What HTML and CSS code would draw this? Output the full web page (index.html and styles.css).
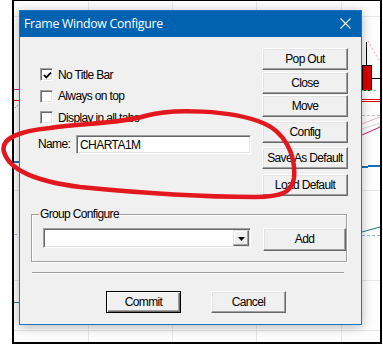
FILE: index.html
```html
<!DOCTYPE html>
<html>
<head>
<meta charset="utf-8">
<link rel="stylesheet" href="styles.css">
</head>
<body>
<div class="screen">
  <div class="frame">
    <svg class="chart" width="366" height="341" viewBox="14 1 366 341">
      <g stroke="#e7e7e7" stroke-width="1">
        <line x1="88.5" y1="0" x2="88.5" y2="344"/>
        <line x1="172.5" y1="0" x2="172.5" y2="344"/>
        <line x1="256.5" y1="0" x2="256.5" y2="344"/>
        <line x1="341.5" y1="0" x2="341.5" y2="344"/>
        <line x1="0" y1="16.5" x2="383" y2="16.5"/>
        <line x1="0" y1="330.5" x2="383" y2="330.5"/>
        <line x1="0" y1="190.5" x2="383" y2="190.5"/>
        <line x1="0" y1="280.5" x2="383" y2="280.5"/>
      </g>
      <!-- left edge fragments -->
      <line x1="14" y1="89.5" x2="20" y2="89.5" stroke="#e0157a" stroke-width="1"/>
      <line x1="14" y1="100.5" x2="20" y2="100.5" stroke="#e00000" stroke-width="1"/>
      <line x1="15" y1="108" x2="18" y2="105" stroke="#40d040" stroke-width="1" stroke-dasharray="2 1"/>
      <line x1="14" y1="162" x2="20" y2="162" stroke="#1a6fb0" stroke-width="2"/>
      <line x1="14" y1="234.5" x2="20" y2="234.5" stroke="#8fb6e0" stroke-width="1" stroke-dasharray="3 2"/>
      <line x1="14" y1="302.5" x2="20" y2="302.5" stroke="#137a7a" stroke-width="1"/>
      <!-- right edge -->
      <line x1="368" y1="41" x2="380" y2="62" stroke="#f0a0b0" stroke-width="1" stroke-dasharray="2 2"/>
      <line x1="366.5" y1="42" x2="366.5" y2="66" stroke="#000" stroke-width="1"/>
      <rect x="362.5" y="65.5" width="9" height="25" fill="#e00000" stroke="#000" stroke-width="1"/>
      <line x1="372" y1="78.5" x2="380" y2="78.5" stroke="#000" stroke-width="1"/>
      <line x1="362" y1="90.5" x2="376" y2="90.5" stroke="#50e050" stroke-width="1" stroke-dasharray="2 2"/>
      <line x1="362" y1="99.5" x2="380" y2="99.5" stroke="#e00000" stroke-width="1"/>
      <line x1="362" y1="101.5" x2="380" y2="101.5" stroke="#e00000" stroke-width="1"/>
      <line x1="362" y1="115.5" x2="380" y2="115.5" stroke="#c0c0c0" stroke-width="1" stroke-dasharray="3 2"/>
      <line x1="362" y1="124" x2="380" y2="117" stroke="#f0b0c8" stroke-width="1"/>
      <line x1="362" y1="129" x2="380" y2="123" stroke="#d8d8d8" stroke-width="1"/>
      <line x1="362" y1="135" x2="380" y2="127" stroke="#e0106a" stroke-width="1"/>
      <line x1="362" y1="167" x2="368" y2="167" stroke="#1a6fb0" stroke-width="2"/>
      <line x1="368" y1="166" x2="380" y2="166" stroke="#1a6fb0" stroke-width="2"/>
      <line x1="362" y1="232" x2="380" y2="227" stroke="#137a7a" stroke-width="1"/>
      <line x1="362" y1="235.5" x2="380" y2="235.5" stroke="#8fb6e0" stroke-width="1" stroke-dasharray="3 2"/>
    </svg>
  </div>

  <div class="dialog">
    <div class="titlebar">
      <span class="title">Frame Window Configure</span>
      <svg class="close" width="11" height="11" viewBox="0 0 11 11"><path d="M0.5 0.5 L10.5 10.5 M10.5 0.5 L0.5 10.5" stroke="#fff" stroke-width="1.1" fill="none"/></svg>
    </div>
    <div class="body">
      <div class="top">
        <div class="left">
          <div class="check"><span class="box"><svg width="9" height="9" viewBox="0 0 9 9"><path d="M1 4 L3.3 6.4 L8 1.6" stroke="#000" stroke-width="1.8" fill="none"/></svg></span><span>No Title Bar</span></div>
          <div class="check"><span class="box"></span><span>Always on top</span></div>
          <div class="check"><span class="box"></span><span>Display in all tabs</span></div>
          <div class="name-row"><span class="name-label">Name:</span><div class="input">CHARTA1M</div></div>
        </div>
        <div class="buttons">
          <div class="btn">Pop Out</div>
          <div class="btn mt2">Close</div>
          <div class="btn mt1">Move</div>
          <div class="btn mt4">Config</div>
          <div class="btn mt4">Save As Default</div>
          <div class="btn mt5">Load Default</div>
        </div>
      </div>
      <fieldset class="group">
        <legend>Group Configure</legend>
        <div class="group-row">
          <div class="combo"><div class="combo-btn"><svg width="7" height="4" viewBox="0 0 7 4"><path d="M0 0 H7 L3.5 4 Z" fill="#000"/></svg></div></div>
          <div class="btn add">Add</div>
        </div>
      </fieldset>
      <div class="sep"></div>
      <div class="footer">
        <div class="btn foot default">Commit</div>
        <div class="btn foot">Cancel</div>
      </div>
    </div>
  </div>

  <svg class="annot" width="383" height="344" viewBox="0 0 383 344">
    <path d="M 50 128 C 80 123, 118 124, 145 116 C 172 108, 232 110, 263 123 C 285 132, 296 155, 294 178 C 292 192, 282 197, 255 197 C 200 197, 130 192, 80 187 C 40 182, 10 172, 4 152 C 0 138, 20 131, 50 128 Z" fill="none" stroke="#e2181e" stroke-width="4.5" stroke-linejoin="round" stroke-linecap="round"/>
  </svg>
</div>
</body>
</html>
```

FILE: styles.css
```css
html, body {
  margin: 0;
  padding: 0;
}
body {
  background: #fff;
  width: 383px;
  height: 344px;
  overflow: hidden;
  font-family: "Liberation Sans", Arial, sans-serif;
  font-size: 12px;
  line-height: 14px;
  letter-spacing: -0.65px;
  color: #000;
}
.screen {
  position: relative;
  width: 383px;
  height: 344px;
}
.frame {
  margin-left: 12px;
  width: 370px;
  height: 344px;
  box-sizing: border-box;
  border: 2px solid #000;
  border-top-width: 1px;
  background: #fdfdfd;
  overflow: hidden;
}
.chart {
  display: block;
}
.dialog {
  position: absolute;
  left: 19px;
  top: 10px;
  width: 343px;
  box-sizing: border-box;
  border: 1px solid #1f74c0;
  background: #f0f0f0;
  box-shadow: 0 2px 10px rgba(0, 0, 0, 0.28);
}
.titlebar {
  height: 26px;
  background: #0063b1;
  display: flex;
  align-items: center;
  justify-content: space-between;
  padding: 0 10px 0 4px;
}
.title {
  font-family: "Open Sans", "Noto Sans", sans-serif;
  font-size: 12.3px;
  letter-spacing: -0.3px;
  color: #fff;
  margin-top: -1px;
}
.close {
  display: block;
  margin-top: -1px;
}
.body {
  padding: 11px 13px 11px 11px;
}
.top {
  display: flex;
  padding-left: 7px;
}
.left {
  flex: 1;
  padding-top: 16px;
}
.check {
  display: flex;
  align-items: center;
  height: 21.5px;
  padding-left: 2px;
}
.box {
  width: 13px;
  height: 13px;
  box-sizing: border-box;
  background: #fff;
  border-style: solid;
  border-width: 1px;
  border-color: #a0a0a0 #fff #fff #a0a0a0;
  box-shadow: inset 1px 1px 0 #696969, inset -1px -1px 0 #e3e3e3;
  margin-right: 5px;
  display: flex;
  align-items: center;
  justify-content: center;
}
.box svg {
  display: block;
  margin: 1px 0 0 1px;
}
.name-row {
  display: flex;
  align-items: center;
  margin-top: 6px;
}
.name-label {
  width: 38px;
}
.input {
  width: 175px;
  height: 19px;
  box-sizing: border-box;
  background: #fff;
  border-style: solid;
  border-width: 1px;
  border-color: #a0a0a0 #fff #fff #a0a0a0;
  box-shadow: inset 1px 1px 0 #696969, inset -1px -1px 0 #e3e3e3;
  padding: 2px 3px 0 3px;
  letter-spacing: -0.55px;
}
.buttons {
  width: 86px;
  display: flex;
  flex-direction: column;
}
.btn {
  height: 22px;
  box-sizing: border-box;
  background: #f0f0f0;
  border-style: solid;
  border-width: 1px;
  border-color: #fff #696969 #696969 #fff;
  box-shadow: inset -1px -1px 0 #a0a0a0, inset 1px 1px 0 #e3e3e3;
  display: flex;
  align-items: center;
  justify-content: center;
  padding-bottom: 1px;
}
.mt1 { margin-top: 1px; }
.mt2 { margin-top: 2px; }
.mt4 { margin-top: 4px; }
.mt5 { margin-top: 5px; }
.group {
  margin: 11px 1px 0 0;
  padding: 7px 0 10px 11px;
  border: 1px solid #a0a0a0;
  box-shadow: 1px 1px 0 #fff, inset 1px 1px 0 #fff;
  min-width: 0;
}
.group legend {
  padding: 0 1px;
  margin-left: -4px;
  height: 14px;
}
.group-row {
  display: flex;
  align-items: flex-start;
}
.combo {
  width: 208px;
  height: 20px;
  box-sizing: border-box;
  background: #fff;
  border-style: solid;
  border-width: 1px;
  border-color: #a0a0a0 #fff #fff #a0a0a0;
  box-shadow: inset 1px 1px 0 #696969, inset -1px -1px 0 #e3e3e3;
  display: flex;
  justify-content: flex-end;
  padding: 1px 1px 1px 0;
}
.combo-btn {
  width: 16px;
  height: 16px;
  box-sizing: border-box;
  background: #f0f0f0;
  border-style: solid;
  border-width: 1px;
  border-color: #e3e3e3 #696969 #696969 #e3e3e3;
  box-shadow: inset -1px -1px 0 #a0a0a0, inset 1px 1px 0 #fff;
  display: flex;
  align-items: center;
  justify-content: center;
}
.combo-btn svg {
  display: block;
  margin-top: 1px;
}
.add {
  width: 83px;
  height: 23px;
  margin-left: 12px;
}
.sep {
  margin: 10px 4px 0 1px;
  height: 0;
  border-top: 1px solid #a0a0a0;
  border-bottom: 1px solid #fff;
}
.footer {
  display: flex;
  gap: 30px;
  padding-left: 75px;
  margin-top: 17px;
}
.foot {
  width: 75px;
}
.default {
  border: 1px solid #000;
  box-shadow: inset 1px 1px 0 #fff, inset -1px -1px 0 #696969, inset -2px -2px 0 #a0a0a0;
}
.annot {
  position: absolute;
  left: 0;
  top: 0;
  pointer-events: none;
}
```
